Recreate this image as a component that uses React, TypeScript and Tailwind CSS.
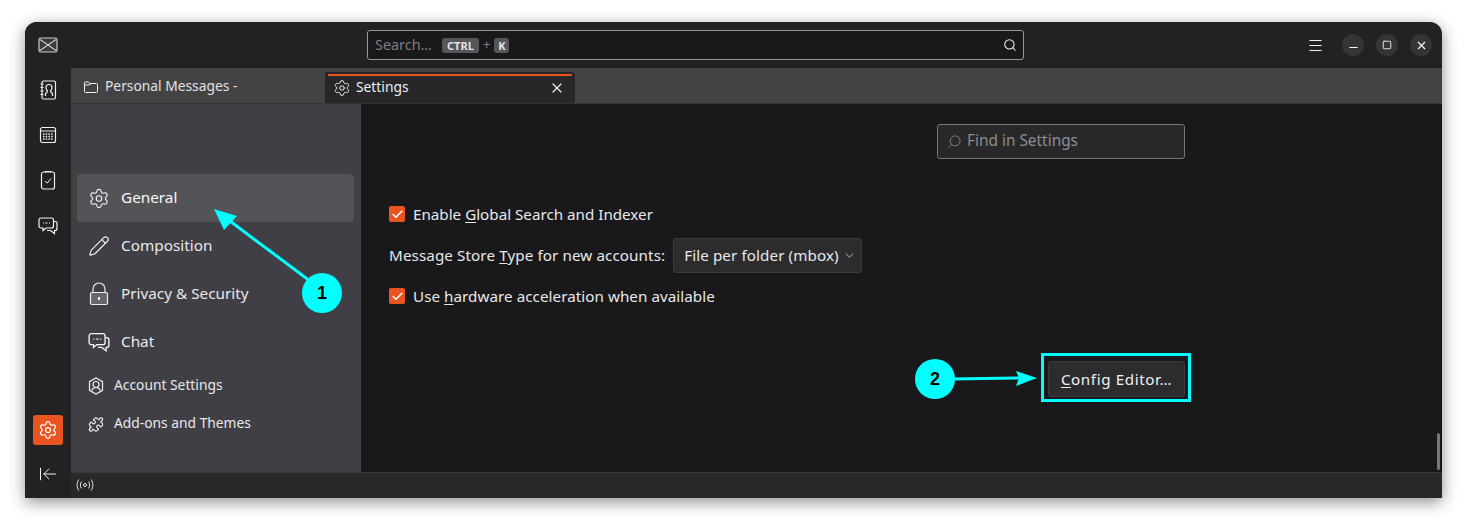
import React from 'react';
import { Settings, Pencil, Search, X, Menu, Minus, Square, Puzzle, Check, ChevronDown, ArrowLeftToLine } from 'lucide-react';

const MailIcon = () => (
    <svg width="20" height="16" viewBox="0 0 20 16" fill="none" stroke="#c8c8ca" strokeWidth="1.2">
        <rect x="1" y="1" width="18" height="14" rx="1.5" fill="#3a3a3c" />
        <path d="M2 2.5 L10 8 L18 2.5 M2 13.5 L10 8 L18 13.5" />
    </svg>
);

const ContactsIcon = () => (
    <svg width="18" height="20" viewBox="0 0 18 20" fill="none" stroke="#f0f0f0" strokeWidth="1.2">
        <rect x="3" y="1" width="13.5" height="18" rx="1.5" />
        <path d="M1.5 4h3M1.5 7.5h3M1.5 11h3M1.5 14.5h3" />
        <path d="M6.5 16v-2.5c1.5-.8 2-1.3 2-2.5C7.5 10 7 8.500 7 7.500 7 5.500 8.300 4.500 10 4.500s3 1 3 3c0 1-.5 2.500-1.500 3.500 0 1.200.5 1.700 2 2.500V16" />
    </svg>
);

const CalendarIcon = () => (
    <svg width="18" height="18" viewBox="0 0 18 18" fill="none" stroke="#f0f0f0" strokeWidth="1.2">
        <rect x="1.500" y="1.500" width="15" height="15" rx="2" />
        <path d="M1.500 5h15" />
        <path d="M4 8h10M4 10.500h10M4 13h10" strokeDasharray="1.500 1.200" strokeWidth="1.300" />
    </svg>
);

const TasksIcon = () => (
    <svg width="16" height="20" viewBox="0 0 16 20" fill="none" stroke="#f0f0f0" strokeWidth="1.2">
        <rect x="1.500" y="2" width="13" height="17" rx="2" />
        <path d="M5.500 2.500V1.500h5v1" />
        <path d="M5 11l2.200 2.200L11 8.500" strokeWidth="1" />
    </svg>
);

const ChatIcon = ({ size = 20 }: { size?: number }) => (
    <svg width={size} height={size} viewBox="0 0 20 20" fill="none" stroke="#f6f6f6" strokeWidth="1.2">
        <path d="M3 2h10.500a2 2 0 0 1 2 2v6a2 2 0 0 1-2 2H8l-3 2.500V12H3a2 2 0 0 1-2-2V4a2 2 0 0 1 2-2z" />
        <path d="M15.500 5.500H17a2 2 0 0 1 2 2v5a2 2 0 0 1-2 2h-.500v3l-4-3H9" />
        <path d="M5 7h1M7.500 7h2M11 7h1" />
    </svg>
);

const LockIcon = () => (
    <svg width="20" height="24" viewBox="0 0 20 24" fill="none" stroke="#eeeeee" strokeWidth="1.200">
        <path d="M4 11V7a6 6 0 0 1 12 0v4" />
        <rect x="1.500" y="10.500" width="17" height="12" rx="1.500" fill="#66666c" />
        <rect x="9" y="15" width="2" height="3" fill="#f0f0f0" stroke="none" />
    </svg>
);

const AccountIcon = () => (
    <svg width="16" height="18" viewBox="0 0 16 18" fill="none" stroke="#eeeeee" strokeWidth="1.200">
        <path d="M8 1l6.500 3.700v8.600L8 17l-6.500-3.700V4.700z" />
        <circle cx="8" cy="7.500" r="3" />
        <path d="M3.500 13.500c1-2 2.500-3 4.500-3s3.500 1 4.500 3" />
    </svg>
);

const FolderIcon = () => (
    <svg width="14" height="12" viewBox="0 0 14 12" fill="none" stroke="#eeeeee" strokeWidth="1">
        <path d="M.5 10.500V2A1 1 0 0 1 1.500 1h3l1 1.500h7a1 1 0 0 1 1 1v7a1 1 0 0 1-1 1h-11a1 1 0 0 1-1-.500z" />
        <path d="M.5 4h5l1-1.500" />
    </svg>
);

const ActivityIcon = () => (
    <svg width="18" height="14" viewBox="0 0 18 14" fill="none" stroke="#e0e0e0" strokeWidth="1">
        <circle cx="9" cy="7" r="1.500" />
        <path d="M5.500 3.500c-1.500 2-1.500 5 0 7M12.500 3.500c1.500 2 1.500 5 0 7M3 1.500c-2.500 3-2.500 8 0 11M15 1.500c2.500 3 2.500 8 0 11" />
    </svg>
);

const railIcons = [<ContactsIcon key="contacts" />, <CalendarIcon key="calendar" />, <TasksIcon key="tasks" />, <ChatIcon key="chat" size={20} />];

const WindowButton = ({ children }: { children: React.ReactNode }) => (
    <div className="flex size-[22px] items-center justify-center rounded-full bg-[#353535] text-[#ffffff]">{children}</div>
);

const CheckRow = ({ children }: { children: React.ReactNode }) => (
    <div className="flex h-[24px] items-center gap-2">
        <div className="flex size-4 items-center justify-center rounded-[2px] bg-[#e95420]">
            <Check size={13} strokeWidth={3} className="text-white" />
        </div>
        <span>{children}</span>
    </div>
);

const NavItem = ({ icon, label, active }: { icon: React.ReactNode; label: string; active?: boolean }) => (
    <div className={`flex h-12 items-center rounded-[4px] pl-[11px] text-[15.3px] ${active ? 'bg-[#535358] text-[#f8f8f8]' : 'text-[#e8e8ea]'}`}>
        <div className="flex w-[22px] justify-center text-[#f0f0f0]">{icon}</div>
        <span className="ml-[11px] pb-[1px]">{label}</span>
    </div>
);

const SubNavItem = ({ icon, label }: { icon: React.ReactNode; label: string }) => (
    <div className="flex h-[38px] items-center pl-[11px] text-[13.8px] text-[#e8e8ea]">
        <div className="flex w-4 justify-center text-[#f0f0f0]">{icon}</div>
        <span className="ml-[10px] pb-[2px]">{label}</span>
    </div>
);

export default function App() {
    return (
        <div className="relative h-[526px] w-[1467px] overflow-hidden bg-white pl-[25px] pt-[22px] font-['Noto_Sans',sans-serif] text-[15.2px] text-[#e8e8ea]">
            <div className="flex h-[476px] w-[1417px] overflow-hidden rounded-t-[12px] bg-[#222222] shadow-[0_4px_16px_rgba(0,0,0,0.45)]">
                {/* left rail */}
                <div className="flex w-[46px] shrink-0 flex-col items-center bg-[#222222] pt-[15px]">
                    <MailIcon />
                    <div className="mt-[27px] flex flex-col items-center gap-[26px]">
                        {railIcons}
                    </div>
                    <div className="mt-auto flex flex-col items-center pb-[14px]">
                        <div className="flex size-[30px] items-center justify-center rounded-[3px] bg-[#e95420]">
                            <Settings size={20} strokeWidth={1.5} className="text-white" />
                        </div>
                        <ArrowLeftToLine size={20} strokeWidth={1.2} className="mt-[19px] text-[#f4f4f4]" />
                    </div>
                </div>

                <div className="flex min-w-0 flex-1 flex-col">
                    {/* title bar */}
                    <div className="flex h-[46px] shrink-0 items-center pl-[296px] pr-[10px]">
                        <div className="flex h-[30px] w-[657px] items-center rounded-[3px] border border-[#9a9a9a] bg-[#19191b] pl-[7px] pr-[6px] text-[14.4px] text-[#7f7f82]">
                            <span>Search…</span>
                            <span className="ml-[10px] w-[37px] rounded-[3px] bg-[#56565b] text-center text-[11px] leading-[15px] font-bold text-[#e4e4e4]">CTRL</span>
                            <span className="mx-[4px] text-[13px]">+</span>
                            <span className="w-[15px] rounded-[3px] bg-[#56565b] text-center text-[11px] leading-[15px] font-bold text-[#e4e4e4]">K</span>
                            <Search size={14} strokeWidth={1.8} className="ml-auto text-[#f4f4f4]" />
                        </div>
                        <Menu size={17} strokeWidth={1.4} className="ml-auto text-[#f8f8f8]" />
                        <div className="ml-[18px] flex gap-3">
                            <WindowButton><Minus size={13} strokeWidth={1.8} className="mt-[4px]" /></WindowButton>
                            <WindowButton><Square size={10} strokeWidth={2} /></WindowButton>
                            <WindowButton><X size={13} strokeWidth={2.1} /></WindowButton>
                        </div>
                    </div>

                    {/* tabs */}
                    <div className="flex h-[36px] shrink-0 border-b border-[#333336] bg-[#434343]">
                        <div className="flex w-[254px] items-center pl-[13px] pt-[2px] text-[13.8px] text-[#e2e2e2]">
                            <FolderIcon />
                            <span className="ml-[7px]">Personal Messages -</span>
                        </div>
                        <div className="mt-[4px] flex w-[250px] flex-col rounded-t-[3px] bg-[#27272a] pb-[4px] pt-[2px]">
                            <div className="mx-[3px] h-[2px] bg-[#e95420]" />
                            <div className="flex flex-1 items-center pl-[8px] pr-[10px] text-[13.8px] text-[#eeeeee]">
                                <Settings size={18} strokeWidth={1.3} />
                                <span className="ml-[5px]">Settings</span>
                                <X size={16} strokeWidth={1.8} className="ml-auto" />
                            </div>
                        </div>
                    </div>

                    <div className="flex min-h-0 flex-1">
                        {/* settings sidebar */}
                        <div className="flex w-[290px] shrink-0 flex-col bg-[#3f3f45] pl-[6px] pr-[7px] pt-[70px]">
                            <NavItem active label="General" icon={<Settings size={23} strokeWidth={1.25} />} />
                            <NavItem label="Composition" icon={<Pencil size={22} strokeWidth={1.25} />} />
                            <NavItem label="Privacy & Security" icon={<LockIcon />} />
                            <NavItem label="Chat" icon={<ChatIcon size={23} />} />
                            <div className="mt-[1px]">
                                <SubNavItem label="Account Settings" icon={<AccountIcon />} />
                                <SubNavItem label="Add-ons and Themes" icon={<Puzzle size={17} strokeWidth={1.7} />} />
                            </div>
                        </div>

                        {/* settings content */}
                        <div className="relative flex min-w-0 flex-1 flex-col bg-[#19191b] pt-[20px]">
                            <div className="mr-[257px] flex h-[35px] w-[248px] items-center self-end rounded-[3px] border border-[#77777a] bg-[#28282b] pl-[9px] text-[15.4px] text-[#8d8d90]">
                                <Search size={15} strokeWidth={1.4} className="-scale-x-100" />
                                <span className="ml-[5px] pb-[1px]">Find in Settings</span>
                            </div>

                            <div className="ml-[28px] mt-[43px] flex flex-col">
                                <CheckRow>Enable <u className="underline-offset-2">G</u>lobal Search and Indexer</CheckRow>
                                <div className="mt-[12px] flex items-center">
                                    <span className="tracking-[0.1px]">Message Store <u className="underline-offset-2">T</u>ype for new accounts:</span>
                                    <div className="ml-2 flex h-[35px] w-[189px] items-center rounded-[3px] border border-[#3c3c40] bg-[#2c2c2f] pl-[10px]">
                                        <span className="tracking-[0.1px]">File per folder (mbox)</span>
                                        <ChevronDown size={13} strokeWidth={1.4} className="ml-auto mr-[5px]" />
                                    </div>
                                </div>
                                <div className="mt-[11px] tracking-[0.05px]">
                                    <CheckRow>Use <u className="underline-offset-2">h</u>ardware acceleration when available</CheckRow>
                                </div>
                            </div>

                            <div className="mr-[257px] mt-[53px] flex h-[36px] w-[137px] items-center justify-center self-end rounded-[3px] border border-[#3c3c40] bg-[#2c2c2f] text-[#f0f0f0]">
                                <span className="tracking-[0.6px]"><u className="underline-offset-2">C</u>onfig Editor…</span>
                            </div>

                            <div className="absolute bottom-[2px] right-[2px] h-[37px] w-[3px] rounded-full bg-[#77777a]" />
                        </div>
                    </div>

                    {/* status bar */}
                    <div className="flex h-[26px] shrink-0 items-center border-t border-[#3a3a3d] bg-[#28282a] pb-[1px] pl-[5px]">
                        <ActivityIcon />
                    </div>
                </div>
            </div>

            {/* annotations drawn over the screenshot */}
            <svg className="absolute left-0 top-0" width="1467" height="526" fill="none">
                <path d="M310 281 L226 218" stroke="#00ffff" strokeWidth="3" />
                <path d="M214 209 L237 216 L224 230 Z" fill="#00ffff" />
                <path d="M950 379 L1020 378" stroke="#00ffff" strokeWidth="3" />
                <path d="M1016 371 L1037 378 L1016 386 L1019 378 Z" fill="#00ffff" />
            </svg>
            <div className="absolute left-[302px] top-[273px] flex size-10 items-center justify-center rounded-full bg-[#00ffff] font-['Liberation_Sans',sans-serif] text-[18px] font-bold text-black">1</div>
            <div className="absolute left-[915px] top-[359px] flex size-10 items-center justify-center rounded-full bg-[#00ffff] font-['Liberation_Sans',sans-serif] text-[18px] font-bold text-black">2</div>
            <div className="absolute left-[1041px] top-[353px] h-[49px] w-[150px] border-[3px] border-[#00ffff]" />
        </div>
    );
}
